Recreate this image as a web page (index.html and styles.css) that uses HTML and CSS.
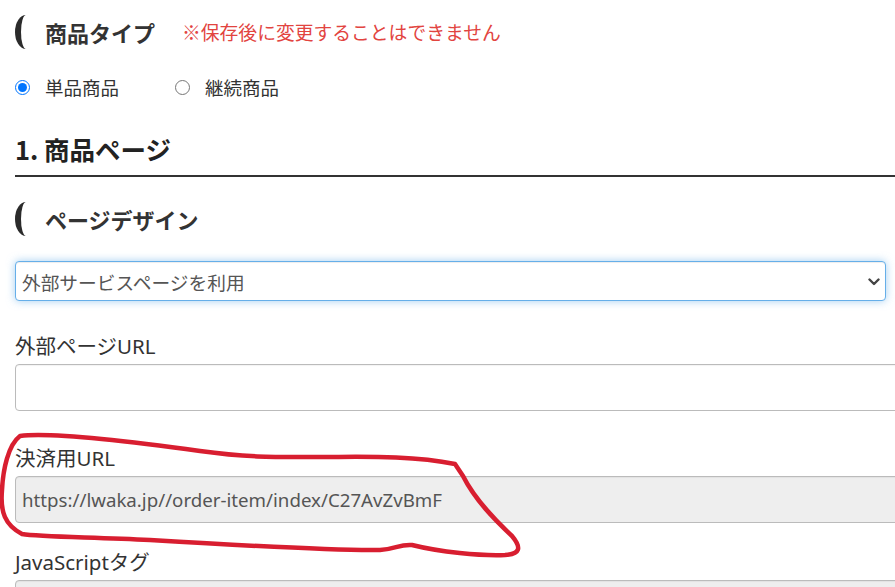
FILE: index.html
```html
<!DOCTYPE html>
<html lang="ja">
<head>
<meta charset="utf-8">
<title>商品設定</title>
<link rel="stylesheet" href="styles.css">
</head>
<body>
<div class="page">
  <div class="sub-head type-head">
    <span class="bracket"></span>
    <span class="sub-title">商品タイプ</span>
    <span class="note">※保存後に変更することはできません</span>
  </div>
  <div class="radios">
    <label class="radio"><input type="radio" name="type" checked><span>単品商品</span></label>
    <label class="radio"><input type="radio" name="type"><span>継続商品</span></label>
  </div>

  <h2 class="section-title">1. 商品ページ</h2>

  <div class="sub-head design-head">
    <span class="bracket"></span>
    <span class="sub-title">ページデザイン</span>
  </div>

  <div class="select-wrap">
    <select class="select">
      <option>外部サービスページを利用</option>
    </select>
    <svg class="chevron" width="12" height="8" viewBox="0 0 12 8"><path d="M1.5 1.5 L6 6 L10.5 1.5" fill="none" stroke="#444" stroke-width="2.4" stroke-linecap="round" stroke-linejoin="round"/></svg>
  </div>

  <label class="field-label first">外部ページURL</label>
  <input class="input" type="text">

  <label class="field-label second">決済用URL</label>
  <input class="input" type="text" value="https://lwaka.jp//order-item/index/C27AvZvBmF" disabled>

  <label class="field-label third">JavaScriptタグ</label>
  <input class="input" type="text" disabled>
</div>

<svg class="annotation" width="895" height="587" viewBox="0 0 895 587">
  <path d="M20,436 C50,432 120,440 200,451 C250,458 280,457 320,457 C360,457 410,455 455,464 L463,476 C475,500 495,520 512,536 C522,548 520,554 505,555 C480,556 440,552 412,545 C400,544 395,549 380,550 C340,551 250,546 150,540 C90,537 40,537 22,534 C5,525 0,512 2,490 C3,470 8,445 20,436 Z" fill="none" stroke="#d81e30" stroke-width="4.5" stroke-linejoin="round" stroke-linecap="round"/>
</svg>
</body>
</html>
```
FILE: styles.css
```css
html, body {
  margin: 0;
  padding: 0;
  background: #fff;
  overflow: hidden;
}
body {
  font-family: "Noto Sans", "Noto Sans CJK JP", sans-serif;
  color: #333;
  width: 895px;
  height: 587px;
  position: relative;
}
.page {
  padding: 0 0 0 15px;
}
.sub-head {
  display: flex;
  align-items: center;
  height: 33px;
}
.type-head {
  margin-top: 15px;
}
.bracket {
  box-sizing: border-box;
  width: 11px;
  height: 34px;
  border-left: 6px solid #2b2b2b;
  border-radius: 11px 0 0 11px / 17px 0 0 17px;
  flex: none;
}
.sub-title {
  margin-left: 19px;
  font-family: "Noto Sans CJK JP", sans-serif;
  font-weight: 700;
  font-size: 22px;
  color: #333;
}
.note {
  margin-left: 27px;
  font-family: "Noto Sans CJK JP", sans-serif;
  font-size: 18.8px;
  color: #e2443f;
}
.radios {
  display: flex;
  align-items: center;
  height: 24px;
  margin-top: 27px;
}
.radio {
  display: flex;
  align-items: center;
  font-family: "Noto Sans CJK JP", sans-serif;
  font-size: 18.5px;
  color: #333;
}
.radio + .radio {
  margin-left: 56px;
}
.radio input {
  width: 15px;
  height: 15px;
  margin: 0 15px 0 0;
  accent-color: #0075ff;
}
.section-title {
  margin: 35px 0 0 0;
  padding: 0 0 11px 0;
  height: 30px;
  line-height: 30px;
  font-family: "Noto Sans CJK JP", sans-serif;
  font-size: 25.5px;
  font-weight: 700;
  color: #222;
  border-bottom: 2px solid #333;
}
.design-head {
  margin-top: 25px;
}
.select-wrap {
  position: relative;
  margin-top: 26px;
  width: 871px;
}
.select {
  appearance: none;
  -webkit-appearance: none;
  display: block;
  box-sizing: border-box;
  width: 871px;
  height: 40px;
  padding: 0 30px 0 6px;
  border: 1px solid #66afe9;
  border-radius: 4px;
  background: #fff;
  box-shadow: inset 0 1px 1px rgba(0,0,0,.075), 0 0 8px rgba(102,175,233,.6);
  font-family: "Noto Sans CJK JP", sans-serif;
  font-size: 18.7px;
  color: #555;
  outline: none;
}
.chevron {
  position: absolute;
  right: 6px;
  top: 17px;
}
.field-label {
  display: block;
  height: 26px;
  line-height: 26px;
  font-family: "Noto Sans", "Noto Sans CJK JP", sans-serif;
  font-size: 20.5px;
  color: #333;
  margin-bottom: 5px;
}
.field-label.first {
  margin-top: 32px;
}
.field-label.second {
  margin-top: 34px;
}
.field-label.third {
  margin-top: 26px;
}
.input {
  display: block;
  box-sizing: border-box;
  width: 910px;
  height: 47px;
  padding: 0 6px;
  border: 1px solid #bbb;
  border-radius: 4px;
  background: #fff;
  font-family: "Noto Sans", sans-serif;
  font-size: 18.7px;
  color: #555;
  box-shadow: inset 0 1px 1px rgba(0,0,0,.05);
}
.input:disabled {
  background: #eee;
  color: #555;
  -webkit-text-fill-color: #555;
  opacity: 1;
}
.annotation {
  position: absolute;
  left: 0;
  top: 0;
  pointer-events: none;
}
```
